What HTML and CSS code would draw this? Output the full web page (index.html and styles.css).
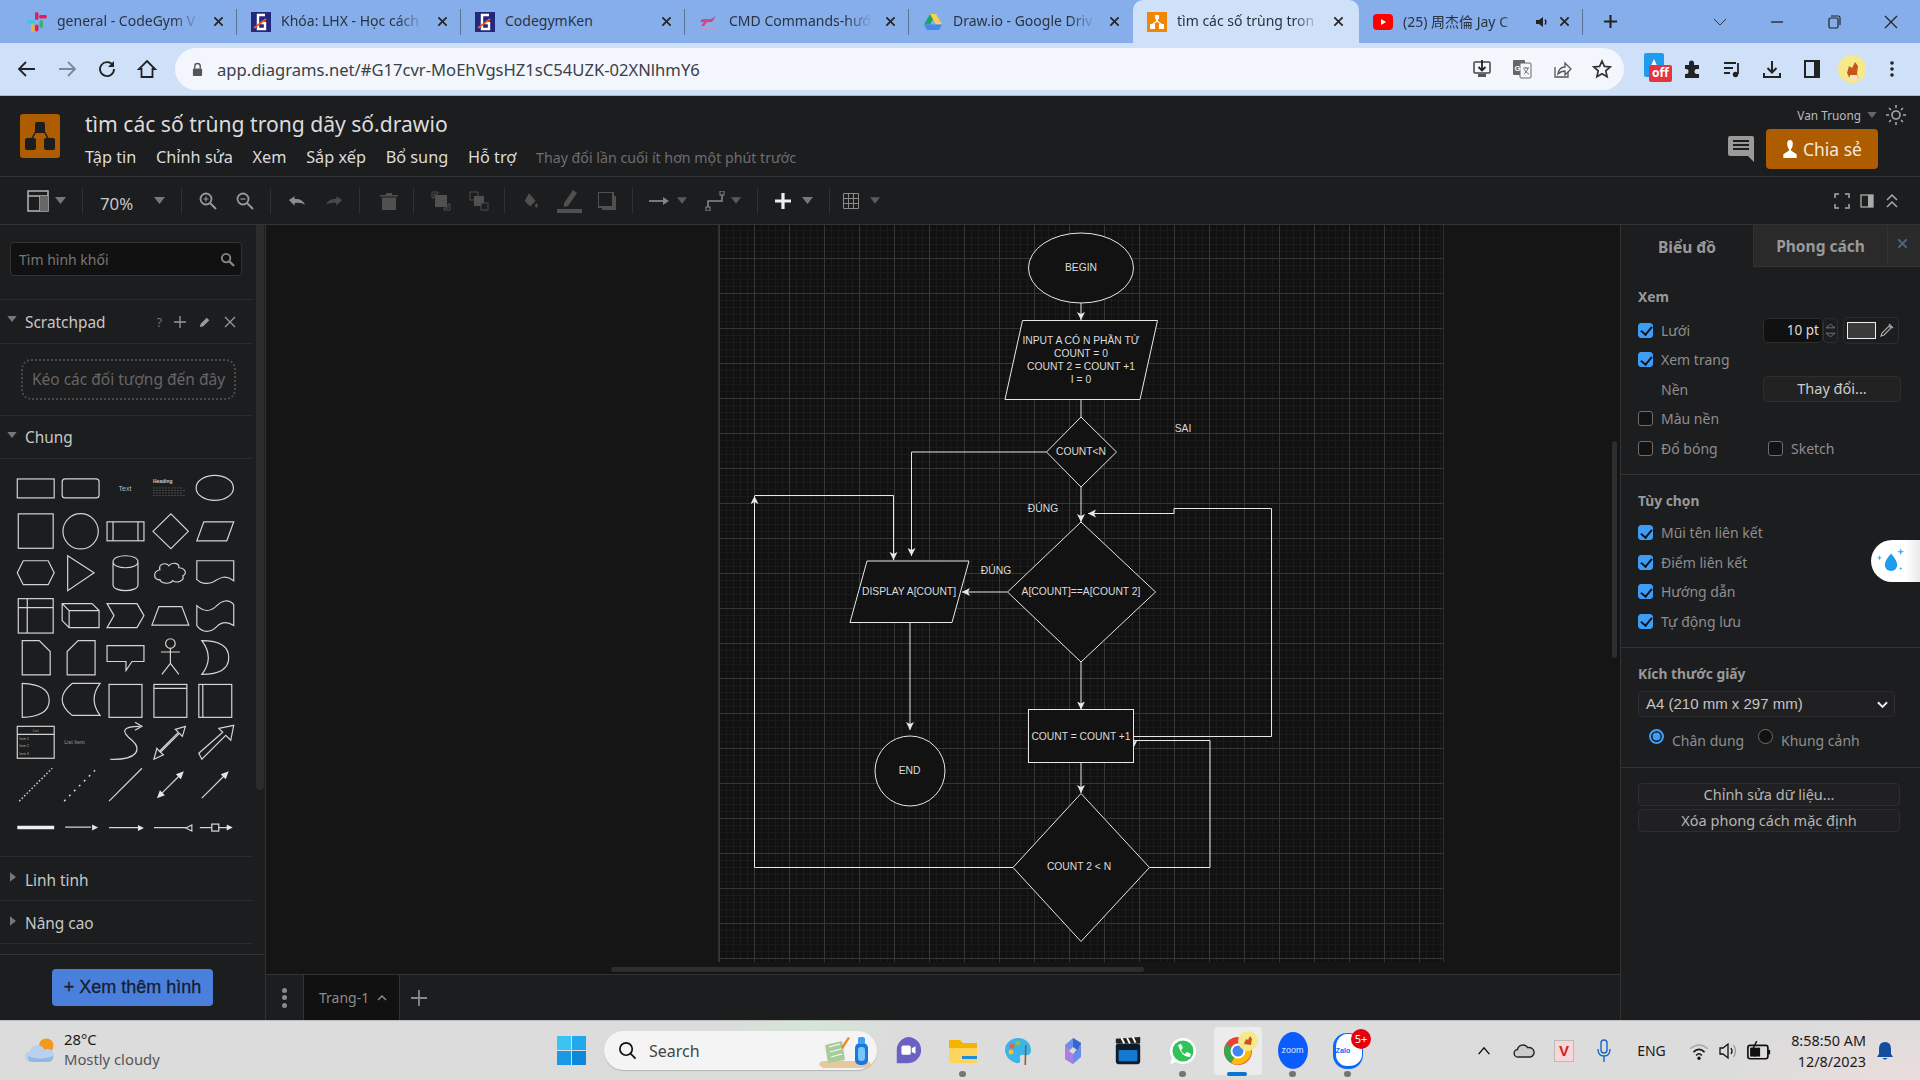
FILE: index.html
```html
<!DOCTYPE html>
<html lang="vi">
<head>
  <meta charset="UTF-8" />
  <title>tìm các số trùng trong dãy số.drawio</title>
  <link rel="stylesheet" href="styles.css">
</head>
<body>
  <svg class="defs" width="0" height="0">
    <symbol id="cg" viewBox="0 0 20 20">
      <rect width="20" height="20" fill="#23297a"/>
      <path d="M14 3H7v14h7v-6H10" fill="none" stroke="#fff" stroke-width="2.4"/>
      <path d="M3 16L15 7" stroke="#f15a22" stroke-width="1.8"/>
    </symbol>
    <symbol id="caret" viewBox="0 0 11 7">
      <path d="M0 0h11L5.5 7z" fill="currentColor"/>
    </symbol>
    <symbol id="x" viewBox="0 0 12 12">
      <path d="M1.5 1.5l9 9M10.5 1.5l-9 9" stroke="currentColor" stroke-width="1.8" fill="none"/>
    </symbol>
  </svg>

  <!-- browser tabs -->
  <div class="tabstrip">
    <div class="tab">
      <svg class="fav" viewBox="0 0 20 20"><rect x="8" y="0" width="3.5" height="8" rx="1.7" fill="#e01e5a"/><rect x="12" y="3" width="8" height="3.5" rx="1.7" fill="#e01e5a"/><rect x="0" y="8" width="8" height="3.5" rx="1.7" fill="#36c5f0"/><rect x="12.5" y="8" width="3.5" height="8" rx="1.7" fill="#2eb67d"/><rect x="4" y="12" width="3.5" height="8" rx="1.7" fill="#ecb22e"/><rect x="8" y="12.5" width="3.5" height="7" rx="1.7" fill="#e01e5a"/></svg>
      <span class="tab-label">general - CodeGym V</span>
      <svg class="tab-x"><use href="#x"/></svg>
    </div>
    <div class="tab">
      <svg class="fav"><use href="#cg"/></svg>
      <span class="tab-label">Khóa: LHX - Học cách</span>
      <svg class="tab-x"><use href="#x"/></svg>
    </div>
    <div class="tab">
      <svg class="fav"><use href="#cg"/></svg>
      <span class="tab-label tab-solid">CodegymKen</span>
      <svg class="tab-x"><use href="#x"/></svg>
    </div>
    <div class="tab">
      <svg class="fav" viewBox="0 0 20 20"><path d="M3 7h9l5-3-4 6H8l-3 4H2l3-4H1z" fill="#d8457c"/><rect x="1" y="15" width="17" height="1.5" fill="#e58aa8"/></svg>
      <span class="tab-label">CMD Commands-hướ</span>
      <svg class="tab-x"><use href="#x"/></svg>
    </div>
    <div class="tab">
      <svg class="fav" viewBox="0 0 20 20"><path d="M7 2h6l-6 10.5H1z" fill="#1fa463"/><path d="M13 2l6 10.5h-6L7 2z" fill="#ffd04b"/><path d="M1 12.5h18L16 18H4z" fill="#4688f1"/></svg>
      <span class="tab-label">Draw.io - Google Driv</span>
      <svg class="tab-x"><use href="#x"/></svg>
    </div>
    <div class="tab tab-active">
      <svg class="fav" viewBox="0 0 20 20"><rect width="20" height="20" fill="#f08705"/><path d="M8 3h4v4h-1v2l4 3h2v5h-5v-5h1l-3-2.3L7 12h1v5H3v-5h2l4-3V7H8z" fill="#fff"/></svg>
      <span class="tab-label">tìm các số trùng tron</span>
      <svg class="tab-x"><use href="#x"/></svg>
    </div>
    <div class="tab">
      <svg class="fav" viewBox="0 0 20 20"><rect y="2" width="20" height="16" rx="4" fill="#f00"/><path d="M8 7l5 3-5 3z" fill="#fff"/></svg>
      <span class="tab-label">(25) 周杰倫 Jay C</span>
      <svg class="tab-sound" viewBox="0 0 14 14"><path d="M1 5h3l4-3v10L4 9H1z" fill="#222"/><path d="M10 4.5q2 2.5 0 5" stroke="#222" fill="none" stroke-width="1.3"/></svg>
      <svg class="tab-x"><use href="#x"/></svg>
    </div>
    <svg class="tab-new" viewBox="0 0 16 16"><path d="M8 1v14M1 8h14" stroke="#222" stroke-width="2.2"/></svg>
    <div class="win-buttons">
      <svg viewBox="0 0 14 14"><path d="M1 4l6 6 6-6" fill="none" stroke="#333" stroke-width="1"/></svg>
      <svg viewBox="0 0 14 14"><path d="M1 7h12" stroke="#222" stroke-width="1.3"/></svg>
      <svg viewBox="0 0 14 14"><rect x="2" y="3" width="9" height="10" rx="1.5" fill="none" stroke="#222" stroke-width="1.2"/><path d="M4 1h7q2 0 2 2v7" fill="none" stroke="#222" stroke-width="1.2"/></svg>
      <svg viewBox="0 0 14 14"><path d="M1 1l12 12M13 1L1 13" stroke="#222" stroke-width="1.2"/></svg>
    </div>
  </div>

  <!-- address bar -->
  <div class="navbar">
    <svg class="nav-icon" viewBox="0 0 20 20"><path d="M18 10H3M9 3l-7 7 7 7" fill="none" stroke="#222" stroke-width="1.8"/></svg>
    <svg class="nav-icon" viewBox="0 0 20 20"><path d="M2 10h15M11 3l7 7-7 7" fill="none" stroke="#7d8796" stroke-width="1.8"/></svg>
    <svg class="nav-icon" viewBox="0 0 20 20"><path d="M16 6.5A7 7 0 1 0 17 10" fill="none" stroke="#222" stroke-width="1.8"/><path d="M17 2v6h-6z" fill="#222"/></svg>
    <svg class="nav-icon" viewBox="0 0 20 20"><path d="M10 2l8 8h-2.500v8h-11v-8H2z" fill="none" stroke="#222" stroke-width="1.8"/></svg>
    <div class="omnibox">
      <svg class="lock" viewBox="0 0 12 16"><path d="M3 7V4.5a3 3 0 0 1 6 0V7" fill="none" stroke="#555" stroke-width="1.5"/><rect x="1" y="7" width="10" height="8" rx="1" fill="#555"/></svg>
      <span class="url">app.diagrams.net/#G17cvr-MoEhVgsHZ1sC54UZK-02XNlhmY6</span>
      <div class="omni-actions">
        <svg viewBox="0 0 20 20"><rect x="2" y="3" width="16" height="11" rx="1" fill="none" stroke="#444" stroke-width="1.5"/><path d="M10 1v10M6.5 8l3.500 3.500L13.500 8" fill="none" stroke="#222" stroke-width="1.8"/><rect x="6" y="15" width="8" height="3" fill="#555"/></svg>
        <svg viewBox="0 0 20 20"><rect x="1" y="1" width="12" height="15" rx="1" fill="#666"/><rect x="8" y="4" width="11" height="15" rx="1" fill="#f3f7fd" stroke="#666"/><text x="2.5" y="12" class="mini-g">G</text><path d="M11 9h6M14 8v1M12 15q3-2 4-6M12 10q2 4 5 5" stroke="#555" fill="none" stroke-width=".8"/></svg>
        <svg viewBox="0 0 20 20"><path d="M3 8v10h13v-5" fill="none" stroke="#555" stroke-width="1.3"/><path d="M6 15q1-7 7-7V4l6 6-6 6v-4q-4 0-7 3z" fill="none" stroke="#555" stroke-width="1.3"/></svg>
        <svg viewBox="0 0 20 20"><path d="M10 2l2.400 5.400 5.800.6-4.400 3.900 1.300 5.800L10 14.700 4.900 17.700l1.300-5.800L1.800 8l5.800-.6z" fill="none" stroke="#333" stroke-width="1.7"/></svg>
      </div>
    </div>
    <div class="ext-icons">
      <div class="ext ext-off">
        <svg viewBox="0 0 20 24"><rect width="20" height="24" rx="2" fill="#1e9cf0"/><path d="M10 6l5 11H5z" fill="#fff"/></svg>
        <span class="off-badge">off</span>
      </div>
      <svg class="ext" viewBox="0 0 20 20"><path d="M3 6h4V4a2.500 2.500 0 0 1 5 0v2h5v4h-2a2.500 2.500 0 0 0 0 5h2v4H3v-4h1a2.500 2.500 0 0 0 0-5H3z" fill="#222"/></svg>
      <svg class="ext" viewBox="0 0 20 20"><path d="M2 4h12M2 9h9M2 14h6" stroke="#222" stroke-width="1.8"/><path d="M16 4v11" stroke="#222" stroke-width="1.8"/><circle cx="13.5" cy="15.5" r="2.7" fill="#222"/></svg>
      <svg class="ext" viewBox="0 0 20 20"><path d="M10 2v11M5.5 9l4.500 4.500L14.500 9" fill="none" stroke="#222" stroke-width="2"/><path d="M2 14v4h16v-4" fill="none" stroke="#222" stroke-width="2"/></svg>
      <svg class="ext" viewBox="0 0 20 20"><rect x="3" y="2" width="14" height="16" fill="none" stroke="#222" stroke-width="2"/><rect x="12" y="2" width="5" height="16" fill="#222"/></svg>
      <svg class="ext ext-avatar" viewBox="0 0 28 28"><circle cx="14" cy="14" r="14" fill="#f6e98a"/><path d="M9 18l2-7 3 2 3-6 3 4-1 8 2 5H12z" fill="#c9541e"/><path d="M12 20h7l2 4H11z" fill="#f2e5c2"/></svg>
      <svg class="ext" viewBox="0 0 20 20"><circle cx="10" cy="4" r="1.8" fill="#222"/><circle cx="10" cy="10" r="1.8" fill="#222"/><circle cx="10" cy="16" r="1.8" fill="#222"/></svg>
    </div>
  </div>

  <!-- app header -->
  <header class="app-header">
    <div class="logo">
      <svg viewBox="0 0 40 44"><path d="M20 10L10 28M20 10l10 18" stroke="#1c1d1f" stroke-width="1.5"/><rect x="15" y="8" width="10" height="11" rx="2" fill="#1c1d1f"/><rect x="5" y="24" width="11" height="12" rx="2" fill="#1c1d1f"/><rect x="24" y="24" width="11" height="12" rx="2" fill="#1c1d1f"/></svg>
    </div>
    <div class="title-block">
      <div class="doc-title">tìm các số trùng trong dãy số.drawio</div>
      <nav class="menu">
        <span>Tập tin</span><span>Chỉnh sửa</span><span>Xem</span><span>Sắp xếp</span><span>Bổ sung</span><span>Hỗ trợ</span>
        <span class="last-saved">Thay đổi lần cuối ít hơn một phút trước</span>
      </nav>
    </div>
    <div class="header-right">
      <div class="user-row">
        <span class="user-name">Van Truong</span>
        <svg class="caret-s"><use href="#caret"/></svg>
        <svg class="sun" viewBox="0 0 22 22"><circle cx="11" cy="11" r="4" fill="none" stroke="#aaa" stroke-width="1.6"/><path d="M11 1v3M11 18v3M1 11h3M18 11h3M4 4l2 2M16 16l2 2M18 4l-2 2M6 16l-2 2" stroke="#aaa" stroke-width="1.5"/></svg>
      </div>
      <div class="share-row">
        <svg class="comment" viewBox="0 0 26 27"><path d="M2 0h22q2 0 2 2v24l-6-6H2q-2 0-2-2V2q0-2 2-2z" fill="#9a9a9a"/><path d="M5 5h16M5 9h16M5 13h16" stroke="#1c1d1f" stroke-width="2.2"/></svg>
        <button class="share-btn">
          <svg viewBox="0 0 16 20"><path d="M8 0q3 0 3 4t-2 6v1l6 4v4H1v-4l6-4v-1Q5 8 5 4t3-4z" fill="#fff"/></svg>
          Chia sẻ
        </button>
      </div>
    </div>
  </header>

  <!-- toolbar -->
  <div class="toolbar">
    <div class="tb-group g1">
      <svg class="ic-panel" viewBox="0 0 22 22"><rect x="1" y="1" width="20" height="20" fill="none" stroke="#b5b5b5" stroke-width="1.5"/><path d="M1 6h20M13 6v15" stroke="#b5b5b5" stroke-width="1.5"/><rect x="13" y="6" width="8" height="15" fill="#666"/></svg>
      <svg class="caret"><use href="#caret"/></svg>
    </div>
    <div class="tb-group g2">
      <span class="zoom-level">70%</span>
      <svg class="caret"><use href="#caret"/></svg>
    </div>
    <div class="tb-group g3">
      <svg class="ic" viewBox="0 0 18 18"><circle cx="7" cy="7" r="5.5" fill="none" stroke="#999" stroke-width="1.8"/><path d="M4.5 7h5M7 4.5v5" stroke="#999" stroke-width="1.2"/><path d="M11 11l6 6" stroke="#999" stroke-width="2"/></svg>
      <svg class="ic" viewBox="0 0 18 18"><circle cx="7" cy="7" r="5.5" fill="none" stroke="#999" stroke-width="1.8"/><path d="M4.5 7h5" stroke="#999" stroke-width="1.2"/><path d="M11 11l6 6" stroke="#999" stroke-width="2"/></svg>
    </div>
    <div class="tb-group g4">
      <svg class="ic" viewBox="0 0 19 18"><path d="M1 8l6-4v3q8-1 11 6-4-3-11-2v3z" fill="#8c8c8c"/></svg>
      <svg class="ic" viewBox="0 0 19 18"><path d="M18 8l-6-4v3q-8-1-11 6 4-3 11-2v3z" fill="#484848"/></svg>
    </div>
    <div class="tb-group g5">
      <svg class="ic" viewBox="0 0 18 18"><path d="M0 3h18v1.5H0zM6 1h6v2H6zM2 5.5h14V18H2z" fill="#505050"/></svg>
    </div>
    <div class="tb-group g6">
      <svg class="ic-w20" viewBox="0 0 20 20"><path d="M1 1h6v2H3v4H1zM13 19h6v-6h-2v4h-4z" fill="none" stroke="#4d4d4d"/><rect x="4" y="4" width="12" height="12" fill="#505050"/></svg>
      <svg class="ic-w20" viewBox="0 0 20 20"><rect x="1" y="1" width="8" height="8" fill="none" stroke="#4d4d4d"/><rect x="5" y="5" width="10" height="10" fill="#505050"/><rect x="12" y="12" width="7" height="7" fill="#1c1d1f" stroke="#4d4d4d"/></svg>
    </div>
    <div class="tb-group g7">
      <svg class="ic" viewBox="0 0 18 20"><path d="M7 1l7 9-6 6-6-6z" fill="#505050"/><path d="M7 1l3 3" stroke="#1c1d1f"/><path d="M15 12q3 4 0 5.5q-3-1.5 0-5.5z" fill="#505050"/></svg>
      <svg class="ic-line" viewBox="0 0 26 26"><path d="M8 15L17 2l4 3-9 13-4 1z" fill="#505050"/><rect x="1" y="21" width="25" height="4" fill="#505050"/></svg>
      <svg class="ic" viewBox="0 0 18 18"><rect x="0" y="0" width="15" height="15" fill="none" stroke="#505050" stroke-width="2"/><rect x="4" y="15" width="14" height="3" fill="#505050"/><rect x="15" y="4" width="3" height="14" fill="#505050"/></svg>
    </div>
    <div class="tb-group g8">
      <svg class="ic-w20" viewBox="0 0 20 20"><path d="M0 10h14" stroke="#848484" stroke-width="1.8"/><path d="M14 6l6 4-6 4z" fill="#848484"/></svg>
      <svg class="caret-m"><use href="#caret"/></svg>
      <svg class="ic-w20 route" viewBox="0 0 20 20"><path d="M3 17V10h14V3" fill="none" stroke="#8a8a8a" stroke-width="1.5"/><rect x="1" y="16" width="4" height="4" fill="#1c1d1f" stroke="#8a8a8a"/><rect x="15" y="0" width="4" height="4" fill="#1c1d1f" stroke="#8a8a8a"/></svg>
      <svg class="caret-m"><use href="#caret"/></svg>
    </div>
    <div class="tb-group g9">
      <svg class="ic-plus" viewBox="0 0 16 16"><path d="M8 0v16M0 8h16" stroke="#eee" stroke-width="3.2"/></svg>
      <svg class="caret"><use href="#caret"/></svg>
    </div>
    <div class="tb-group g10">
      <svg class="ic-plus" viewBox="0 0 16 16"><path d="M.5.5h15v15H.5zM.5 5.5h15M.5 10.5h15M5.5.5v15M10.5.5v15" fill="none" stroke="#8a8a8a"/></svg>
      <svg class="caret-m"><use href="#caret"/></svg>
    </div>
    <div class="tb-right">
      <svg viewBox="0 0 16 16"><path d="M1 5V1h4M11 1h4v4M15 11v4h-4M5 15H1v-4" fill="none" stroke="#aaa" stroke-width="1.5"/></svg>
      <svg viewBox="0 0 16 16"><rect x="2" y="2" width="12" height="12" fill="none" stroke="#aaa" stroke-width="1.3"/><rect x="9" y="2" width="5" height="12" fill="#aaa"/></svg>
      <svg viewBox="0 0 16 16"><path d="M3 7l5-5 5 5M3 14l5-5 5 5" fill="none" stroke="#aaa" stroke-width="1.5"/></svg>
    </div>
  </div>

  <div class="workspace">
    <!-- shapes sidebar -->
    <aside class="sidebar">
      <div class="sb-search">
        <div class="search-box">
          <span>Tìm hình khối</span>
          <svg viewBox="0 0 16 16"><circle cx="6.5" cy="6.5" r="4.5" fill="none" stroke="#888" stroke-width="2"/><path d="M10 10l5 5" stroke="#888" stroke-width="2.4"/></svg>
        </div>
      </div>
      <div class="sb-head sb-scratch">
        <svg class="tri-down"><use href="#caret"/></svg>
        <span>Scratchpad</span>
        <div class="sb-actions">
          <span class="q">?</span>
          <svg viewBox="0 0 12 12"><path d="M6 0v12M0 6h12" stroke="#999" stroke-width="1.3"/></svg>
          <svg viewBox="0 0 14 14"><path d="M1 13l1-4 7-7 3 3-7 7z" fill="#999"/></svg>
          <svg viewBox="0 0 12 12"><path d="M1 1l10 10M11 1L1 11" stroke="#999" stroke-width="1.3"/></svg>
        </div>
      </div>
      <div class="sb-drop"><div class="drop-zone">Kéo các đối tượng đến đây</div></div>
      <div class="sb-head">
        <svg class="tri-down"><use href="#caret"/></svg>
        <span>Chung</span>
      </div>
      <svg class="palette" viewBox="0 459 253 398">
        <g class="p">
          <rect x="17" y="479" width="37" height="19"/>
          <rect x="62" y="479" width="37" height="19" rx="3"/>
          <text x="125" y="491" class="p-text">Text</text>
          <text x="153" y="483" class="p-head">Heading</text>
          <path class="p-thin" d="M153 488h30M153 490.5h32M153 493h30M153 495.5h32"/>
          <ellipse cx="215" cy="488" rx="18.7" ry="12.5"/>

          <rect x="18" y="514" width="35" height="34.5"/>
          <circle cx="80.5" cy="531.5" r="17.7"/>
          <rect x="107" y="522" width="37" height="19"/>
          <path d="M113 522v19M138 522v19"/>
          <path d="M153 531.5L171 514l17.500 17.500L171 549z"/>
          <path d="M204 522h30l-7 19h-30z"/>

          <path d="M17 573l6-12h25l6 12-6 12H23z"/>
          <path d="M67.5 556L94 573 67.5 591z"/>
          <path d="M113 562c0-8 25-8 25 0v23c0 8-25 8-25 0zM113 562c0 8 25 8 25 0"/>
          <path d="M160 570c-2-7 7-7 9-4 3-4 11-3 10 2 6 0 9 6 4 8 2 5-6 8-10 5-3 4-12 3-13-1-6 1-8-8 0-10z"/>
          <path d="M197 561h37v20c-9-7-15-2-20 1-6 3-13 2-17-2z"/>

          <rect x="18" y="599" width="35" height="34.5"/>
          <path d="M18 608h35M27 599v34.5"/>
          <path d="M62 604h30l7 7v17H69l-7-7zM62 604l7 7h30M69 611v17"/>
          <path d="M107 604h30l7 12-7 12h-30l7-12z"/>
          <path d="M152 625.5h37l-7-18.500h-23z"/>
          <path d="M197 606c9 8 15 5 20 0 5-5 12-7 17-1v21c-6-4-12-4-17 1-6 6-14 7-20-1z"/>

          <path d="M22 641h17l11 11v23.5H22z"/>
          <path d="M78 641h17v34.5H67V652z"/>
          <path d="M107 646h37v16h-12l-6 9v-9h-19z"/>
          <circle cx="170.5" cy="644" r="4.8"/>
          <path d="M170.5 649v15M161 652.5h19M170.5 664l-8.500 11M170.5 664l8.500 11"/>
          <path d="M202 641q27 0 27 17t-27 17q13-17 0-34z"/>

          <path d="M22 684q27 1 27 17t-27 17z"/>
          <path d="M72 684h28q-12 16 0 32H72q-10-8-10-16t10-16z"/>
          <rect x="109" y="685" width="33" height="33"/>
          <rect x="154" y="685" width="33" height="33"/>
          <path d="M154 689h33"/>
          <rect x="199" y="685" width="33" height="33"/>
          <path d="M203 685v33"/>

          <rect x="17" y="727" width="37" height="32"/>
          <path d="M17 735h37"/>
          <text x="35.5" y="733" class="p-tiny">List</text>
          <text x="19" y="741" class="p-tiny-l">Item 1</text>
          <text x="19" y="748" class="p-tiny-l">Item 2</text>
          <text x="19" y="756" class="p-tiny-l">Item 3</text>
          <text x="64" y="745" class="p-small">List Item</text>
          <path d="M110 760c28 1 32-10 22-19-10-8-12-14 8-14"/>
          <path d="M135 723l7 4-7 4"/>
          <path d="M154 760l3-11 2.500 3 19-19-3-3 10-3-3 10-3-3-19 19 3 2.500z"/>
          <path d="M199 754l3 6 24-24 5 5 3-15-15 3 4 4z"/>

          <path class="p-dot" d="M19 802l33-33"/>
          <path class="p-dot2" d="M64 802l31-31"/>
          <path d="M109 802l33-33"/>
          <path d="M160 796l21-21"/>
          <path class="p-fill" d="M157 799l3-8 5 5zM184 772l-3 8-5-5z"/>
          <path d="M202 799l24-24"/>
          <path class="p-fill" d="M229 772l-3 8-5-5z"/>

          <path class="p-thick" d="M17 828.5h37"/>
          <path d="M65 828h26M109 828.5h32M154 828.5h32M200 828.5h28"/>
          <path class="p-fill" d="M98 828.5l-6-3v6zM144 829l-6-3v6zM233 828.5l-6-3v6z"/>
          <path d="M186 829l6-3v6z"/>
          <rect x="212" y="825" width="7" height="7" class="p-box"/>
        </g>
      </svg>
      <div class="sb-head sb-closed">
        <svg class="tri-right"><use href="#caret"/></svg>
        <span>Linh tinh</span>
      </div>
      <div class="sb-head sb-closed">
        <svg class="tri-right"><use href="#caret"/></svg>
        <span>Nâng cao</span>
      </div>
      <div class="sb-foot">
        <button class="more-btn">+ Xem thêm hình</button>
      </div>
      <div class="sb-scroll"></div>
    </aside>

    <main class="center">
      <div class="canvas">
        <div class="page">
          <svg class="diagram" viewBox="718 224 725 738">
            <defs>
              <marker id="arr" markerUnits="userSpaceOnUse" markerWidth="9" markerHeight="9" refX="8" refY="4" orient="auto">
                <path d="M0 0L8 4 0 8 2 4z" fill="#e8e8e8"/>
              </marker>
            </defs>
            <g class="edges">
              <path d="M1081 303V320" marker-end="url(#arr)"/>
              <path d="M1081 399V417"/>
              <path d="M1046.5 452H911.5V556" marker-end="url(#arr)"/>
              <path d="M1081 487V522" marker-end="url(#arr)"/>
              <path d="M1133.5 736.5H1271.5V508.5H1174V513.5H1088" marker-end="url(#arr)"/>
              <path d="M1007.5 592H962" marker-end="url(#arr)"/>
              <path d="M1081 662V709.5" marker-end="url(#arr)"/>
              <path d="M1081 762.5V793" marker-end="url(#arr)"/>
              <path d="M1149 867.5H1210V740.5H1133.5V748" marker-end="url(#arr)"/>
              <path d="M1013 867.5H754.5V496" marker-end="url(#arr)"/>
              <path d="M754.5 495.5H893.5V560" marker-end="url(#arr)"/>
              <path d="M910 622.5V730" marker-end="url(#arr)"/>
            </g>
            <g class="nodes">
              <ellipse cx="1081" cy="268" rx="52.5" ry="35"/>
              <path d="M1022.5 320.5H1157.5L1140 399.5H1005z"/>
              <path d="M1081 417L1116.5 452 1081 487 1046.5 452z"/>
              <path d="M1081 522L1155.5 592 1081 662 1007.5 592z"/>
              <path d="M867 561H969L952 622.5H850z"/>
              <rect x="1028.5" y="709.5" width="105" height="53"/>
              <ellipse cx="910" cy="771" rx="35" ry="35"/>
              <path d="M1081 793.5L1149.5 867.5 1081 941.5 1013 867.5z"/>
            </g>
            <g class="labels">
              <text x="1081" y="270.5">BEGIN</text>
              <text x="1081" y="344">INPUT A CÓ N PHẦN TỬ</text>
              <text x="1081" y="356.5">COUNT = 0</text>
              <text x="1081" y="369.5">COUNT 2 = COUNT +1</text>
              <text x="1081" y="382.5">I = 0</text>
              <text x="1081" y="454.5">COUNT&lt;N</text>
              <text x="1081" y="594.5">A[COUNT]==A[COUNT 2]</text>
              <text x="909" y="594.5">DISPLAY A[COUNT]</text>
              <text x="1081" y="739.5">COUNT = COUNT +1</text>
              <text x="909.5" y="774">END</text>
              <text x="1079" y="870">COUNT 2 &lt; N</text>
              <text x="1183" y="431.5">SAI</text>
              <text x="1043" y="511.5">ĐÚNG</text>
              <text x="996" y="573.5">ĐÚNG</text>
            </g>
          </svg>
        </div>
        <div class="hscroll"></div>
        <div class="vscroll"></div>
      </div>
      <div class="page-tabs">
        <div class="kebab"><i></i><i></i><i></i></div>
        <div class="page-tab">Trang-1
          <svg viewBox="0 0 10 6"><path d="M1 5l4-4 4 4" fill="none" stroke="#888" stroke-width="1.5"/></svg>
        </div>
        <svg class="page-add" viewBox="0 0 18 18"><path d="M9 1v16M1 9h16" stroke="#888" stroke-width="1.8"/></svg>
      </div>
    </main>

    <!-- format panel -->
    <aside class="format">
      <div class="fmt-tabs">
        <div class="fmt-tab fmt-tab-on">Biểu đồ</div>
        <div class="fmt-tab">Phong cách</div>
        <div class="fmt-close"><svg viewBox="0 0 12 12"><path d="M1.5 1.5l9 9M10.5 1.5l-9 9" stroke="#54657a" stroke-width="2.2"/></svg></div>
      </div>
      <section class="fmt-section s-view">
        <h3>Xem</h3>
        <div class="rows">
          <div class="row">
            <span class="check on"></span><span class="lbl lbl-a">Lưới</span>
            <div class="pt-input">10 pt</div>
            <div class="spin">
              <svg viewBox="0 0 12 6"><path d="M1 5l5-4 5 4z" fill="none" stroke="#777"/></svg>
              <svg viewBox="0 0 12 6"><path d="M1 1l5 4 5-4z" fill="none" stroke="#777"/></svg>
            </div>
            <div class="color-btn">
              <span class="swatch"></span>
              <svg viewBox="0 0 14 14"><path d="M1 13l1-3 7-7 2 2-7 7zM9 1l4 4" fill="none" stroke="#aaa" stroke-width="1.2"/></svg>
            </div>
          </div>
          <div class="row"><span class="check on"></span><span class="lbl">Xem trang</span></div>
          <div class="row">
            <span class="check-gap"></span><span class="lbl lbl-a">Nền</span>
            <div class="wide-btn">Thay đổi...</div>
          </div>
          <div class="row"><span class="check"></span><span class="lbl">Màu nền</span></div>
          <div class="row">
            <span class="check"></span><span class="lbl lbl-b">Đổ bóng</span>
            <span class="check"></span><span class="lbl">Sketch</span>
          </div>
        </div>
      </section>
      <section class="fmt-section s-opts">
        <h3>Tùy chọn</h3>
        <div class="rows">
          <div class="row"><span class="check on"></span><span class="lbl">Mũi tên liên kết</span></div>
          <div class="row"><span class="check on"></span><span class="lbl">Điểm liên kết</span></div>
          <div class="row"><span class="check on"></span><span class="lbl">Hướng dẫn</span></div>
          <div class="row"><span class="check on"></span><span class="lbl">Tự động lưu</span></div>
        </div>
      </section>
      <section class="fmt-section s-paper">
        <h3>Kích thước giấy</h3>
        <div class="select">A4 (210 mm x 297 mm)
          <svg viewBox="0 0 12 8"><path d="M1 1l5 5 5-5" fill="none" stroke="#eee" stroke-width="2"/></svg>
        </div>
        <div class="row radios">
          <span class="radio on"></span><span class="lbl lbl-r">Chân dung</span>
          <span class="radio"></span><span class="lbl lbl-r">Khung cảnh</span>
        </div>
      </section>
      <section class="fmt-actions">
        <div class="action-btn">Chỉnh sửa dữ liệu...</div>
        <div class="action-btn">Xóa phong cách mặc định</div>
      </section>
      <div class="drop-widget">
        <svg viewBox="0 0 34 30"><path d="M17 7q7 8 7 13a7 7 0 0 1-14 0q0-5 7-13z" fill="#1e9cf0"/><path d="M28 1l1 3 3 1-3 1-1 3-1-3-3-1 3-1zM4 9l.8 2.200L7 12l-2.200.8L4 15l-.8-2.200L1 12l2.200-.8zM28 22l.6 1.400 1.400.6-1.400.6-.6 1.400-.6-1.400-1.400-.6 1.400-.6z" fill="#3fb0f5"/></svg>
      </div>
    </aside>
  </div>

  <!-- windows taskbar -->
  <footer class="taskbar">
    <div class="weather">
      <svg viewBox="0 0 32 28"><circle cx="22" cy="9" r="7.5" fill="#f29a1f"/><path d="M6 26a5.500 5.500 0 0 1-1-11 8 8 0 0 1 15-2 6.500 6.500 0 0 1 6 13z" fill="#b9d0ee"/><path d="M3 20q12 5 26 0v2q-2 4-6 4H6q-3-1-3-6z" fill="#94b6e4"/></svg>
      <div class="weather-text"><div>28°C</div><div class="dim">Mostly cloudy</div></div>
    </div>
    <svg class="start" viewBox="0 0 29 29"><rect width="14" height="14" fill="#3cc3f4"/><rect x="15" width="14" height="14" fill="#22a6ec"/><rect y="15" width="14" height="14" fill="#1a9ae4"/><rect x="15" y="15" width="14" height="14" fill="#1187d8"/></svg>
    <div class="search-pill">
      <svg class="pill-mag" viewBox="0 0 20 20"><circle cx="8.5" cy="8.5" r="6.5" fill="none" stroke="#111" stroke-width="1.8"/><path d="M13 13l5.500 5.500" stroke="#111" stroke-width="1.8"/></svg>
      <span>Search</span>
      <svg class="pill-art" viewBox="0 0 56 34"><path d="M2 30q0-4 6-4h40q6 0 6 4l-3 3H6z" fill="#e8c99b"/><path d="M8 10l17-4 3 19-17 3z" fill="#a9cc9a"/><path d="M12 12l11-3M13 17l11-3M14 22l11-3" stroke="#fff"/><path d="M24 12l7-10 2 1-7 11z" fill="#ef8a2a"/><rect x="38" y="8" width="13" height="22" rx="5" fill="#1a77e0"/><rect x="41" y="2" width="7" height="7" rx="2" fill="#3fa0ef"/><rect x="41" y="12" width="7" height="14" rx="3" fill="#78c7f7"/></svg>
    </div>
    <div class="apps">
      <div class="app"><svg viewBox="0 0 30 32"><path d="M15 1a14 14 0 0 1 14 14 14 14 0 0 1-14 14H3v-14A14 14 0 0 1 15 1z" fill="#6b61c4"/><rect x="8" y="10" width="10" height="10" rx="2" fill="#fff"/><path d="M19 13l4-2v8l-4-2z" fill="#fff"/></svg></div>
      <div class="app"><svg viewBox="0 0 30 30"><path d="M1 4h11l3 3h14v20H1z" fill="#f4b400"/><rect x="1" y="12" width="28" height="15" fill="#ffd45e"/><rect x="14" y="20" width="15" height="3" fill="#1a8cd8"/></svg><i class="run-dot"></i></div>
      <div class="app"><svg viewBox="0 0 30 30"><path d="M15 2c8 0 13 6 13 12 0 5-4 6-7 5-3-1-5 1-4 4 1 3-1 5-4 4C6 25 2 19 2 14 2 7 8 2 15 2z" fill="#3bb4ea"/><circle cx="9" cy="10" r="2.5" fill="#f05a4a"/><circle cx="15" cy="7" r="2.5" fill="#8bc34a"/><circle cx="8" cy="16" r="2.5" fill="#f7c331"/><path d="M22 9l1.500 0-.5 20h-1.500z" fill="#8a5a34"/></svg></div>
      <div class="app"><svg viewBox="0 0 30 30"><path d="M15 2l8 5v14l-8 7-8-5V9z" fill="#6a8fe8"/><path d="M15 2l8 5-5 10-3-2z" fill="#3a63cf"/><path d="M7 9l8 6v13l-8-5z" fill="#a880e0"/><path d="M15 11l4 3-4 4-4-3z" fill="#dcdcdc"/></svg></div>
      <div class="app"><svg viewBox="0 0 30 32"><rect x="2" y="8" width="26" height="22" rx="3" fill="#0d1b2a"/><rect x="5" y="15" width="20" height="12" fill="#1678d0"/><path d="M2 3l26-2v7H2z" fill="#222"/><path d="M8 2l3 6M14 2l3 6M20 1l3 6" stroke="#fff" stroke-width="2"/></svg></div>
      <div class="app"><svg viewBox="0 0 30 30"><path d="M15 2a13 13 0 0 1 0 26q-4 0-7-2l-6 2 2-6a13 13 0 0 1 11-20z" fill="#fff"/><circle cx="15" cy="15" r="10.5" fill="#2fc35a"/><path d="M10 9l3-1 2 4-2 2q1 3 4 4l2-2 4 2-1 3q-8 1-12-12z" fill="#fff"/></svg><i class="run-dot"></i></div>
      <div class="app app-active">
        <svg viewBox="0 0 30 30"><circle cx="15" cy="15" r="14" fill="#ea4335"/><path d="M15 15L28 12A14 14 0 0 1 8 27z" fill="#fbbc05"/><path d="M15 15L8 27A14 14 0 0 1 3 8z" fill="#34a853"/><circle cx="15" cy="15" r="6.5" fill="#4285f4" stroke="#fff" stroke-width="2"/></svg>
        <svg class="chrome-badge" viewBox="0 0 20 20"><circle cx="10" cy="10" r="10" fill="#f6e98a"/><path d="M6 13l2-5 2 1 2-4 2 3-1 6z" fill="#c9541e"/></svg>
        <i class="run-bar"></i>
      </div>
      <div class="app"><div class="zoom-ic">zoom</div><i class="run-dot"></i></div>
      <div class="app"><div class="zalo-ic">Zalo</div><span class="zalo-badge">5+</span><i class="run-dot"></i></div>
    </div>
    <div class="tray">
      <svg class="tr tr-up" viewBox="0 0 14 10"><path d="M1 9l6-7 6 7" fill="none" stroke="#111" stroke-width="1.5"/></svg>
      <svg class="tr tr-cloud" viewBox="0 0 22 16"><path d="M5 15a4 4 0 0 1-1-8 6 6 0 0 1 11-2 5 5 0 0 1 3 10z" fill="#ccc" stroke="#222" stroke-width="1.5"/></svg>
      <div class="v-ic">V</div>
      <svg class="tr tr-mic" viewBox="0 0 14 24"><rect x="4" y="1" width="6" height="13" rx="3" fill="none" stroke="#1768c4" stroke-width="1.4"/><path d="M1 10q0 7 6 7t6-7M7 17v6" fill="none" stroke="#1768c4" stroke-width="1.4"/></svg>
      <span class="eng">ENG</span>
      <svg class="tr wifi" viewBox="0 0 20 18"><path d="M2 7q8-7 16 0" fill="none" stroke="#aaa" stroke-width="1.3"/><path d="M5 10q5-5 10 0M7.5 13q2.500-3 5 0" fill="none" stroke="#111" stroke-width="1.5"/><circle cx="10" cy="15.5" r="1.5" fill="#111"/></svg>
      <svg class="tr spk" viewBox="0 0 20 20"><path d="M2 7h3l5-4v14l-5-4H2z" fill="none" stroke="#111" stroke-width="1.3"/><path d="M13 7q2 3 0 6" fill="none" stroke="#111" stroke-width="1.3"/><path d="M15.5 4q4 6 0 12" fill="none" stroke="#999" stroke-width="1.3"/></svg>
      <svg class="tr batt" viewBox="0 0 22 18"><rect x="1" y="4" width="18" height="12" rx="2" fill="none" stroke="#111" stroke-width="1.5"/><rect x="3" y="6" width="9" height="8" fill="#111"/><rect x="19" y="8" width="2" height="4" fill="#111"/><path d="M9 0L5 8h4l-2 6" fill="none" stroke="#111" stroke-width="1.3"/></svg>
      <div class="clock"><div>8:58:50 AM</div><div>12/8/2023</div></div>
      <svg class="bell" viewBox="0 0 16 20"><path d="M8 1q6 0 6 7v5l2 3H0l2-3V8q0-7 6-7z" fill="#12509f"/><path d="M5.5 17q2.500 3 5 0z" fill="#12509f"/></svg>
    </div>
  </footer>
</body>
</html>
```

FILE: styles.css
```css
* {
  box-sizing: border-box;
}
html, body {
  margin: 0;
  padding: 0;
}
body {
  width: 1920px;
  height: 1080px;
  overflow: hidden;
  font-family: "Noto Sans", "Noto Sans CJK TC", sans-serif;
  background: #1c1d1f;
  display: flex;
  flex-direction: column;
  position: relative;
}
.defs {
  position: absolute;
}

/* browser chrome */
.tabstrip {
  height: 43px;
  background: #85aeea;
  display: flex;
  align-items: center;
  padding-left: 13px;
  flex: none;
}
.tab {
  width: 224px;
  height: 43px;
  display: flex;
  align-items: center;
  padding: 0 13px 0 14px;
  gap: 10px;
  position: relative;
  color: #2b3340;
  font-size: 14px;
  flex: none;
}
.tab::after {
  content: "";
  position: absolute;
  right: 0;
  top: 9px;
  bottom: 8px;
  width: 1px;
  background: #5b7295;
}
.tab:nth-child(5)::after,
.tab:nth-child(6)::after {
  display: none;
}
.tab-active {
  background: #cfe0f9;
  border-radius: 10px 10px 0 0;
  width: 226px;
  padding-right: 15px;
}
.fav {
  width: 20px;
  height: 20px;
  flex: none;
}
.tab-label {
  flex: 1;
  white-space: nowrap;
  margin-top: -2px;
  -webkit-mask-image: linear-gradient(90deg, #000 80%, transparent 98%);
  mask-image: linear-gradient(90deg, #000 80%, transparent 98%);
}
.tab-solid {
  -webkit-mask-image: none;
  mask-image: none;
}
.tab-x {
  width: 11px;
  height: 11px;
  flex: none;
  color: #222;
}
.tab-sound {
  width: 14px;
  height: 14px;
  flex: none;
}
.tab-new {
  width: 15px;
  height: 15px;
  margin-left: 20px;
  flex: none;
}
.win-buttons {
  margin-left: auto;
  display: flex;
  align-items: center;
  gap: 43px;
  padding-right: 22px;
}
.win-buttons svg {
  width: 14px;
  height: 14px;
}
.navbar {
  height: 53px;
  flex: none;
  background: #cfe0f9;
  border-bottom: 1px solid #aab6c9;
  display: flex;
  align-items: center;
  padding: 0 0 0 17px;
}
.nav-icon {
  width: 20px;
  height: 20px;
  margin-right: 20px;
  flex: none;
}
.omnibox {
  width: 1449px;
  height: 42px;
  margin-left: -2px;
  border-radius: 21px;
  background: #f3f7fd;
  display: flex;
  align-items: center;
  padding: 0 12px 0 17px;
  flex: none;
}
.lock {
  width: 11px;
  height: 15px;
  flex: none;
}
.url {
  margin-left: 14px;
  font-size: 16.6px;
  color: #3a4048;
  white-space: nowrap;
}
.omni-actions {
  margin-left: auto;
  display: flex;
  gap: 20px;
}
.omni-actions svg {
  width: 20px;
  height: 20px;
}
.mini-g {
  font: bold 8px "Liberation Sans", sans-serif;
  fill: #fff;
}
.ext-icons {
  display: flex;
  align-items: center;
  margin-left: 20px;
}
.ext {
  width: 20px;
  height: 20px;
  margin-right: 20px;
  flex: none;
}
.ext-off {
  position: relative;
  width: 20px;
  height: 24px;
  margin-right: 18px;
  margin-top: -8px;
}
.ext-off svg {
  width: 20px;
  height: 24px;
  display: block;
}
.off-badge {
  position: absolute;
  left: 5px;
  top: 12px;
  width: 23px;
  height: 17px;
  background: #e5343d;
  color: #fff;
  font-size: 12px;
  font-weight: 700;
  line-height: 16px;
  text-align: center;
  border-radius: 2px;
}
.ext-avatar {
  width: 28px;
  height: 28px;
  margin-left: -4px;
  margin-right: 16px;
}

/* drawio header */
.app-header {
  height: 81px;
  flex: none;
  display: flex;
  background: #1c1d1f;
  border-bottom: 1px solid #333;
  color: #dcdcdc;
  position: relative;
}
.logo {
  width: 40px;
  height: 44px;
  margin: 18px 0 0 20px;
  background: #ad5c00;
  border-radius: 3px;
  flex: none;
}
.logo svg {
  display: block;
  width: 40px;
  height: 44px;
}
.title-block {
  margin-left: 25px;
  padding-top: 13px;
}
.doc-title {
  font-size: 21.1px;
  line-height: 30px;
  white-space: nowrap;
}
.menu {
  display: flex;
  gap: 19.7px;
  margin-top: 6px;
  font-size: 16.3px;
  line-height: 24px;
  align-items: baseline;
  white-space: nowrap;
}
.last-saved {
  font-size: 14.2px;
  color: #6e6e6e;
}
.header-right {
  margin-left: auto;
  width: 200px;
  padding: 8px 15px 0 0;
  display: flex;
  flex-direction: column;
  align-items: flex-end;
}
.user-row {
  display: flex;
  align-items: center;
  height: 22px;
  color: #bbb;
  font-size: 11.8px;
}
.caret-s {
  width: 10px;
  height: 6px;
  margin: 0 0 0 6px;
  color: #666;
}
.sun {
  width: 22px;
  height: 22px;
  margin-left: 8px;
  margin-right: -2px;
}
.share-row {
  display: flex;
  align-items: center;
  margin-top: 3px;
  padding-right: 27px;
}
.comment {
  width: 26px;
  height: 27px;
  margin-right: 12px;
}
.share-btn {
  width: 112px;
  height: 40px;
  background: #ad5c00;
  color: #f3e9da;
  border: none;
  border-radius: 4px;
  font: 17.5px "Noto Sans", sans-serif;
  display: flex;
  align-items: center;
  justify-content: center;
  gap: 5px;
}
.share-btn svg {
  width: 16px;
  height: 19px;
}

/* drawio toolbar */
.toolbar {
  height: 48px;
  flex: none;
  display: flex;
  align-items: center;
  padding-left: 11px;
  background: #1c1d1f;
  border-bottom: 1px solid #333;
}
.tb-group {
  height: 26px;
  display: flex;
  align-items: center;
  padding: 0 16px;
  gap: 19px;
  border-right: 1px solid #2f3032;
  flex: none;
}
.g1 { gap: 6px; }
.g2 { gap: 20px; padding-left: 17px; }
.g3 { padding-left: 17px; }
.g4 { padding-left: 17px; }
.g5 { padding: 0 15px 0 20px; }
.g6 { padding: 0 15px 0 17px; gap: 18px; }
.g7 { gap: 16px; padding-left: 17px; }
.g8 { gap: 8px; }
.g9 { gap: 11px; padding-left: 17px; }
.g10 { gap: 11px; padding-left: 13px; border-right: none; }
.route { margin-left: 10px; }
.g8 .caret-m:last-child { margin-left: -2px; }
.caret, .caret-m {
  width: 11px;
  height: 7px;
  color: #777;
  flex: none;
}
.caret-m {
  width: 10px;
  color: #5a5a5a;
}
.ic-panel {
  width: 22px;
  height: 22px;
}
.zoom-level {
  font-size: 16.8px;
  color: #c8c8c8;
  width: 34px;
  white-space: nowrap;
  padding-top: 5px;
}
.ic {
  width: 18px;
  height: 18px;
  flex: none;
}
.ic-w20 {
  width: 20px;
  height: 20px;
  flex: none;
}
.ic-line {
  width: 26px;
  height: 26px;
  flex: none;
}
.ic-plus {
  width: 16px;
  height: 16px;
  flex: none;
}
.tb-right {
  margin-left: auto;
  display: flex;
  gap: 9px;
  padding-right: 20px;
}
.tb-right svg {
  width: 16px;
  height: 16px;
}

/* main area */
.workspace {
  flex: 1;
  min-height: 0;
  display: flex;
  position: relative;
}
.sidebar {
  width: 266px;
  flex: none;
  padding-right: 13px;
  background: #1c1d1f;
  border-right: 1px solid #333;
  position: relative;
  color: #c8c8c8;
  font-size: 15.4px;
}
.sb-search {
  height: 75px;
  padding: 17px 10px 0 10px;
  border-bottom: 1px solid #2b2c2e;
}
.search-box {
  height: 34px;
  background: #111;
  border: 1px solid #333;
  border-radius: 4px;
  display: flex;
  align-items: center;
  justify-content: space-between;
  padding: 0 6px 0 8px;
  color: #777;
  font-size: 14px;
}
.search-box svg {
  width: 15px;
  height: 15px;
}
.sb-head {
  height: 43px;
  display: flex;
  align-items: center;
  padding: 1px 0 0 25px;
  border-bottom: 1px solid #2b2c2e;
  position: relative;
}
.sb-scratch {
  height: 44px;
}
.tri-down {
  position: absolute;
  left: 7px;
  top: 16px;
  width: 10px;
  height: 6px;
  color: #777;
}
.tri-right {
  position: absolute;
  left: 8px;
  top: 17px;
  width: 10px;
  height: 6px;
  color: #777;
  transform: rotate(-90deg);
}
.sb-actions {
  margin-left: auto;
  display: flex;
  align-items: center;
  gap: 13px;
  padding-right: 16px;
}
.sb-actions .q {
  color: #777;
  font-size: 12px;
  margin-right: -1px;
}
.sb-actions svg {
  width: 12px;
  height: 12px;
}
.sb-drop {
  height: 72px;
  padding: 15px 16px 0 21px;
  border-bottom: 1px solid #2b2c2e;
}
.drop-zone {
  height: 41px;
  border: 2px dotted #4a4a4a;
  border-radius: 10px;
  color: #666;
  font-size: 15.5px;
  text-align: center;
  line-height: 37px;
  white-space: nowrap;
}
.palette {
  display: block;
  width: 253px;
  height: 398px;
  border-bottom: 1px solid #2b2c2e;
}
.p {
  fill: none;
  stroke: #d4d4d4;
  stroke-width: 1.2;
}
.p-text {
  font: 7px "Liberation Sans", sans-serif;
  fill: #bbb;
  stroke: none;
  text-anchor: middle;
}
.p-head {
  font: bold 5px "Liberation Sans", sans-serif;
  fill: #ccc;
  stroke: none;
}
.p-thin {
  stroke: #777;
  stroke-width: .5;
  stroke-dasharray: 2 1;
}
.p-tiny {
  font: 3.5px "Liberation Sans", sans-serif;
  fill: #aaa;
  stroke: none;
  text-anchor: middle;
}
.p-tiny-l {
  font: 3.5px "Liberation Sans", sans-serif;
  fill: #aaa;
  stroke: none;
}
.p-small {
  font: 5.5px "Liberation Sans", sans-serif;
  fill: #999;
  stroke: none;
}
.p-dot {
  stroke-dasharray: 1.5 2;
  stroke-width: 1.5;
}
.p-dot2 {
  stroke-dasharray: 2 5;
  stroke-width: 1.5;
}
.p-fill {
  fill: #e4e4e4;
  stroke: none;
}
.p-thick {
  stroke: #eee;
  stroke-width: 3.5;
}
.p-box {
  fill: #1c1d1f;
  stroke: #ddd;
}
.sb-closed {
  height: 44px;
  padding-top: 3px;
}
.sb-closed + .sb-closed {
  height: 43px;
}
.sb-foot {
  margin-right: -13px;
  margin-top: 10px;
  border-top: 1px solid #333;
  padding: 14px 0 0 52px;
}
.more-btn {
  width: 161px;
  height: 37px;
  background: #4a80dc;
  border: none;
  border-radius: 4px;
  color: #16202f;
  font: 18px "Liberation Sans", sans-serif;
  -webkit-text-stroke: .3px #16202f;
  white-space: nowrap;
  padding: 0;
}
.sb-scroll {
  position: absolute;
  right: 1px;
  top: 0;
  width: 8px;
  height: 565px;
  background: #2b2c2e;
  border-radius: 0 0 4px 4px;
}

/* canvas */
.center {
  flex: 1;
  min-width: 0;
  display: flex;
  flex-direction: column;
}
.canvas {
  flex: 1;
  min-height: 0;
  background: #151515;
  position: relative;
  overflow: hidden;
}
.page {
  position: absolute;
  left: 452px;
  top: -1px;
  width: 726px;
  height: 738px;
  border-left: 1px solid #2f2f2f;
  border-right: 1px solid #2f2f2f;
  background-color: #111;
  background-image:
    linear-gradient(#363636 1px, transparent 1px),
    linear-gradient(90deg, #363636 1px, transparent 1px),
    linear-gradient(#1b1b1b 1px, transparent 1px),
    linear-gradient(90deg, #1b1b1b 1px, transparent 1px);
  background-size: 35px 35px, 35px 35px, 7px 7px, 7px 7px;
  background-position: 0 34px, 0 0, 0 6px, 0 0;
}
.diagram {
  position: absolute;
  left: -1px;
  top: 0;
  width: 725px;
  height: 738px;
}
.edges {
  fill: none;
  stroke: #e8e8e8;
  stroke-width: 1;
}
.nodes {
  fill: #121212;
  stroke: #e8e8e8;
  stroke-width: 1;
}
.labels {
  fill: #dcdcdc;
  font: 10.3px "Liberation Sans", sans-serif;
  text-anchor: middle;
}
.hscroll {
  position: absolute;
  left: 345px;
  bottom: 2px;
  width: 533px;
  height: 5px;
  border-radius: 3px;
  background: #2c2d2f;
}
.vscroll {
  position: absolute;
  right: 3px;
  top: 216px;
  width: 5px;
  height: 217px;
  border-radius: 3px;
  background: #2c2d2f;
}
.page-tabs {
  height: 46px;
  flex: none;
  display: flex;
  align-items: stretch;
  border-top: 1px solid #333;
  background: #1c1d1f;
}
.kebab {
  width: 38px;
  display: flex;
  flex-direction: column;
  align-items: center;
  justify-content: center;
  gap: 2.5px;
  border-right: 1px solid #333;
}
.kebab i {
  width: 5px;
  height: 5px;
  border-radius: 50%;
  background: #8a8a8a;
}
.page-tab {
  width: 96px;
  background: #111;
  border-right: 1px solid #333;
  color: #8c8c8c;
  font-size: 14px;
  display: flex;
  align-items: center;
  padding-left: 15px;
  gap: 8px;
}
.page-tab svg {
  width: 10px;
  height: 6px;
}
.page-add {
  width: 18px;
  height: 18px;
  margin: 14px 0 0 10px;
}

/* format panel */
.format {
  width: 300px;
  flex: none;
  background: #1c1d1f;
  border-left: 1px solid #333;
  position: relative;
  color: #8e8e8e;
  font-size: 14px;
}
.fmt-tabs {
  height: 42px;
  display: flex;
}
.fmt-tab {
  width: 134px;
  background: #2a2a2a;
  border-bottom: 1px solid #333;
  border-right: 1px solid #333;
  text-align: center;
  font-weight: 700;
  font-size: 15.5px;
  line-height: 43px;
  color: #999;
}
.fmt-tab-on {
  background: #1c1d1f;
  border-bottom: none;
  width: 133px;
  line-height: 44px;
}
.fmt-close {
  flex: 1;
  background: #2a2a2a;
  border-bottom: 1px solid #333;
  padding: 13px 0 0 9px;
}
.fmt-close svg {
  display: block;
  width: 11px;
  height: 11px;
}
.fmt-section {
  padding-left: 17px;
  padding-right: 20px;
  border-bottom: 1px solid #333;
}
.fmt-section h3 {
  margin: 0;
  font-size: 13.8px;
  line-height: 20px;
  font-weight: 700;
  color: #999;
}
.s-view {
  padding-top: 20px;
  padding-bottom: 11px;
}
.s-opts, .s-paper {
  padding-top: 16px;
}
.s-opts {
  padding-bottom: 11px;
}
.s-paper {
  padding-bottom: 13px;
}
.rows {
  margin-top: 8.5px;
}
.s-opts .rows {
  margin-top: 7px;
}
.row {
  height: 29.5px;
  display: flex;
  align-items: center;
}
.check {
  width: 15px;
  height: 15px;
  background: #121212;
  border: 1.5px solid #6e6e6e;
  border-radius: 3px;
  flex: none;
  margin-right: 8px;
  position: relative;
}
.check.on {
  background: #3f9cf5;
  border-color: #3f9cf5;
}
.check.on::after {
  content: "";
  position: absolute;
  left: 3.5px;
  top: .5px;
  width: 5px;
  height: 9px;
  border: solid #10161f;
  border-width: 0 2px 2px 0;
  transform: rotate(40deg);
}
.check-gap {
  width: 23px;
  flex: none;
}
.lbl {
  white-space: nowrap;
}
.lbl-a {
  width: 102px;
  flex: none;
}
.lbl-b {
  width: 107px;
  flex: none;
}
.pt-input {
  width: 60px;
  height: 25px;
  background: #111;
  border: 1px solid #2e2e2e;
  border-radius: 5px;
  color: #ddd;
  font-size: 13.5px;
  text-align: right;
  line-height: 23px;
  padding-right: 3px;
  flex: none;
}
.spin {
  width: 15px;
  height: 25px;
  border: 1px solid #2e2e2e;
  border-radius: 4px;
  display: flex;
  flex-direction: column;
  justify-content: center;
  align-items: center;
  gap: 3px;
  flex: none;
}
.spin svg {
  width: 11px;
  height: 6px;
}
.color-btn {
  width: 56px;
  height: 27px;
  margin-left: 5px;
  border: 1px solid #2e2e2e;
  border-radius: 5px;
  display: flex;
  align-items: center;
  padding-left: 3px;
  gap: 4px;
  flex: none;
}
.swatch {
  width: 29px;
  height: 17px;
  background: #3a3a3a;
  border: 1px solid #eee;
}
.color-btn svg {
  width: 14px;
  height: 14px;
}
.wide-btn {
  width: 138px;
  height: 26px;
  background: #222;
  border: 1px solid #2e2e2e;
  border-radius: 5px;
  color: #ccc;
  font-size: 14.5px;
  text-align: center;
  line-height: 23px;
  flex: none;
}
.select {
  margin-top: 7px;
  width: 257px;
  height: 26px;
  border: 1px solid #2e2e2e;
  border-radius: 4px;
  background: #202022;
  color: #c4c4c4;
  font: 15px/24px "Liberation Sans", sans-serif;
  padding-left: 7px;
  position: relative;
}
.select svg {
  position: absolute;
  right: 6px;
  top: 9px;
  width: 11px;
  height: 8px;
}
.radios {
  height: 30px;
  margin-top: 7px;
  padding-left: 11px;
}
.radio {
  width: 15px;
  height: 15px;
  border-radius: 50%;
  border: 1.5px solid #6e6e6e;
  background: #111;
  margin-top: -5px;
  margin-right: 8px;
  flex: none;
}
.radio.on {
  background: #3f9cf5;
  border: 2px solid #3f9cf5;
  box-shadow: inset 0 0 0 1.5px #111;
}
.lbl-r {
  width: 85px;
  flex: none;
  padding-top: 2px;
}
.lbl-r + .radio {
  margin-left: 1px;
}
.fmt-actions {
  padding: 15px 20px 0 17px;
  display: flex;
  flex-direction: column;
  gap: 3px;
}
.action-btn {
  height: 23px;
  background: #202022;
  border: 1px solid #2e2e2e;
  border-radius: 4px;
  color: #b5b5b5;
  font-size: 14.5px;
  text-align: center;
  line-height: 20px;
}
.drop-widget {
  position: absolute;
  right: 0;
  top: 315px;
  width: 49px;
  height: 42px;
  background: linear-gradient(90deg, #fff 70%, #e9e9e9);
  border-radius: 21px 0 0 21px;
  padding: 7px 0 0 5px;
}
.drop-widget svg {
  display: block;
  width: 30px;
  height: 27px;
}

/* windows taskbar */
.taskbar {
  height: 60px;
  flex: none;
  display: flex;
  align-items: center;
  padding-left: 25px;
  border-top: 1px solid #bdbdbd;
  background:
    radial-gradient(ellipse 90px 50px at 810px 0, #d3e6d6, transparent),
    radial-gradient(ellipse 200px 70px at 1920px 60px, #ecdcdc, transparent),
    #dcdcdc;
  color: #1a1a1a;
}
.weather {
  width: 532px;
  display: flex;
  align-items: center;
  gap: 8px;
  flex: none;
}
.weather svg {
  width: 31px;
  height: 27px;
}
.weather-text {
  font-size: 14.8px;
  line-height: 20px;
  margin-top: -3px;
}
.dim {
  color: #555;
}
.start {
  width: 29px;
  height: 29px;
  flex: none;
}
.search-pill {
  width: 273px;
  height: 39px;
  margin-left: 18px;
  background: #f4f4f4;
  border-radius: 20px;
  box-shadow: 0 1px 1px #b5b5b5;
  display: flex;
  align-items: center;
  padding-left: 14px;
  gap: 12px;
  color: #444;
  font-size: 16px;
  flex: none;
  position: relative;
}
.pill-mag {
  width: 19px;
  height: 19px;
}
.pill-art {
  position: absolute;
  right: 4px;
  top: 4px;
  width: 56px;
  height: 34px;
}
.apps {
  display: flex;
  margin-left: 3px;
  flex: none;
}
.app {
  width: 55px;
  height: 58px;
  display: flex;
  align-items: center;
  justify-content: center;
  position: relative;
}
.app > svg {
  width: 30px;
  height: 30px;
}
.app-active::before {
  content: "";
  position: absolute;
  left: 3.5px;
  right: 3.5px;
  top: 5px;
  bottom: 5px;
  border-radius: 4px;
  background: #ececec;
}
.app-active > svg {
  position: relative;
}
.app-active > .chrome-badge {
  position: absolute;
  left: 28px;
  top: 9px;
  width: 20px;
  height: 20px;
}
.run-dot {
  position: absolute;
  left: 24px;
  bottom: 3px;
  width: 7px;
  height: 6px;
  border-radius: 3px;
  background: #757575;
}
.run-bar {
  position: absolute;
  left: 17px;
  bottom: 4px;
  width: 20px;
  height: 4px;
  border-radius: 2px;
  background: #0b74d1;
}
.zoom-ic {
  width: 30px;
  height: 37px;
  border-radius: 50%;
  background: #0b5cff;
  color: #dce8ff;
  font: 9px/37px "Liberation Sans", sans-serif;
  text-align: center;
}
.zalo-ic {
  width: 30px;
  height: 36px;
  border-radius: 14px;
  background: #fff;
  border: solid #0a68ff;
  border-width: 1px 1px 3px 3px;
  color: #0a68ff;
  font: bold 7.2px/34px "Liberation Sans", sans-serif;
  text-align: left;
}
.zalo-badge {
  position: absolute;
  left: 31px;
  top: 7px;
  width: 20px;
  height: 20px;
  border-radius: 50%;
  background: #e8000d;
  color: #fff;
  font-size: 11px;
  line-height: 20px;
  text-align: center;
}
.tray {
  margin-left: auto;
  padding-right: 16px;
  display: flex;
  align-items: center;
  flex: none;
}
.tr {
  width: 40px;
  height: 20px;
  flex: none;
}
.tr-up {
  height: 9px;
}
.tr-cloud {
  height: 15px;
}
.tr-mic {
  height: 24px;
}
.v-ic {
  width: 20px;
  height: 22px;
  margin: 0 10px;
  background: #f6d6d6;
  border: 1px solid #bbb;
  color: #c22;
  font: bold 15px/20px "Liberation Sans", sans-serif;
  text-align: center;
  flex: none;
}
.eng {
  width: 55px;
  text-align: center;
  font-size: 14px;
  flex: none;
}
.wifi {
  width: 32px;
  margin-left: 4px;
}
.spk {
  width: 26px;
}
.batt {
  width: 32px;
  margin-left: 2px;
}
.clock {
  width: 91px;
  text-align: right;
  font-size: 14.4px;
  line-height: 21px;
  flex: none;
}
.bell {
  width: 16px;
  height: 20px;
  margin: 0 11px;
  flex: none;
}
```
